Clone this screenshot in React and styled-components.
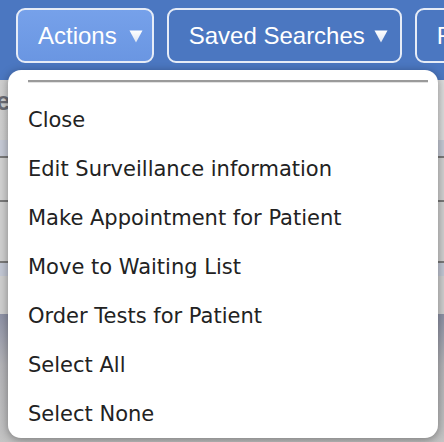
import React from "react";
import styled, { createGlobalStyle } from "styled-components";

const GlobalStyle = createGlobalStyle`
    html, body {
        margin: 0;
        padding: 0;
        background: #d4d4d4;
    }
`;

const menuItems = [
    "Close",
    "Edit Surveillance information",
    "Make Appointment for Patient",
    "Move to Waiting List",
    "Order Tests for Patient",
    "Select All",
    "Select None",
];

const Page = styled.div`
    position: relative;
    width: 444px;
    height: 442px;
    overflow: hidden;
    font-family: "Liberation Sans", Arial, sans-serif;
`;

const Toolbar = styled.div`
    height: 80px;
    background: #4b77c1;
    display: flex;
    align-items: flex-start;
    gap: 13px;
    padding: 8px 0 0 16px;
    box-sizing: border-box;
    white-space: nowrap;
`;

const ToolButton = styled.div`
    flex: none;
    height: 55px;
    box-sizing: border-box;
    display: flex;
    align-items: center;
    padding: 0 ${(p) => p.pr}px 0 20px;
    border: 2px solid #e6ecf7;
    border-radius: 9px;
    color: #fff;
    font-size: 24px;
    background: ${(p) => (p.active ? "linear-gradient(#76a1ea, #6a96e2)" : "#4b77c1")};
`;

const Caret = styled.svg`
    margin-left: ${(p) => p.gap}px;
    margin-top: 2px;
`;

const Content = styled.div`
    background: #d6d6d6;
    height: 362px;
    display: flex;
    flex-direction: column;
`;

const TitleRow = styled.div`
    height: 60px;
    padding-top: 6px;
    box-sizing: border-box;
    background: linear-gradient(90deg, #cfcfcf, #dcdcdc);
    color: #6b6c75;
    font-weight: bold;
    font-size: 26px;
    margin-left: -4px;
`;

const Row = styled.div`
    height: ${(p) => p.h}px;
    background: ${(p) => p.bg};
    border-bottom: ${(p) => (p.line ? "2px solid #7a7a7a" : "none")};
    flex: none;
`;

const Fade = styled.div`
    flex: 1;
    background: linear-gradient(#8e92a6, #b4b4b8 40%, #c4c4c4);
`;

const Menu = styled.div`
    position: absolute;
    left: 8px;
    top: 70px;
    width: 430px;
    height: 368px;
    background: #fff;
    border-radius: 13px;
    box-shadow: 0 2px 10px rgba(0, 0, 0, 0.38);
    padding: 10px 10px 0 20px;
    box-sizing: border-box;
`;

const Divider = styled.div`
    height: 2px;
    background: #9a9a9a;
    border-bottom: 1px solid #e2e2e2;
    margin-bottom: 12px;
`;

const MenuItem = styled.div`
    height: 49px;
    display: flex;
    align-items: center;
    font-family: "DejaVu Sans", Verdana, sans-serif;
    font-size: 21px;
    color: #222;
`;

const CaretIcon = ({ gap }) => (
    <Caret gap={gap} width="14" height="13" viewBox="0 0 14 13">
        <defs>
            <linearGradient id="cg" x1="0" y1="0" x2="0" y2="1">
                <stop offset="0" stopColor="#ffffff" />
                <stop offset="1" stopColor="#dfe6f3" />
            </linearGradient>
        </defs>
        <path d="M0.5 0.5 L13.5 0.5 L7 12.5 Z" fill="url(#cg)" />
    </Caret>
);

export default function App() {
    return (
        <Page>
            <GlobalStyle />
            <Toolbar>
                <ToolButton active pr={9}>
                    Actions
                    <CaretIcon gap={12} />
                </ToolButton>
                <ToolButton pr={12}>
                    Saved Searches
                    <CaretIcon gap={9} />
                </ToolButton>
                <ToolButton pr={12}>Filter</ToolButton>
            </Toolbar>
            <Content>
                <TitleRow>e</TitleRow>
                <Row h={16} bg="#c6cad6" line />
                <Row h={42} bg="#d2d2d2" line />
                <Row h={59} bg="#d0d0d0" line />
                <Row h={13} bg="#c3c8d5" />
                <Row h={38} bg="#cfcfcf" />
                <Fade />
            </Content>
            <Menu>
                <Divider />
                {menuItems.map((item) => (
                    <MenuItem key={item}>{item}</MenuItem>
                ))}
            </Menu>
        </Page>
    );
}
